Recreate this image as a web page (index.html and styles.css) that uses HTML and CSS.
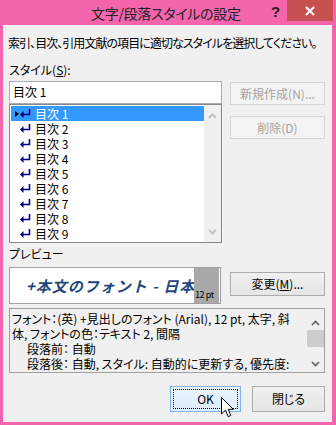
FILE: index.html
```html
<!DOCTYPE html>
<html lang="ja">
<head>
<meta charset="utf-8">
<link rel="stylesheet" href="styles.css">
</head>
<body>
<div class="window">
  <div class="titlebar">
    <div class="title">文字/段落スタイルの設定</div>
    <div class="help">?</div>
    <div class="close">
      <svg width="10" height="10" viewBox="0 0 10 10"><path d="M1 1L9 9M9 1L1 9" stroke="#fff" stroke-width="2" fill="none"/></svg>
    </div>
  </div>
  <div class="client">
    <p class="intro">索引、目次、引用文献の項目に適切なスタイルを選択してください。</p>
    <div class="top">
      <div class="left">
        <div class="label">スタイル(<u>S</u>):</div>
        <div class="input">目次 1</div>
        <div class="list">
          <div class="items">
            <div class="item sel"><span class="tri"></span><svg class="ret" width="11" height="9" viewBox="0 0 11 9"><path d="M9.5 0V5.5H3" stroke="#000080" stroke-width="1.6" fill="none"/><path d="M0 5.5L3.5 2V9Z" fill="#000080"/></svg><span>目次 1</span></div>
            <div class="item"><span class="tri"></span><svg class="ret" width="11" height="9" viewBox="0 0 11 9"><path d="M9.5 0V5.5H3" stroke="#000080" stroke-width="1.6" fill="none"/><path d="M0 5.5L3.5 2V9Z" fill="#000080"/></svg><span>目次 2</span></div>
            <div class="item"><span class="tri"></span><svg class="ret" width="11" height="9" viewBox="0 0 11 9"><path d="M9.5 0V5.5H3" stroke="#000080" stroke-width="1.6" fill="none"/><path d="M0 5.5L3.5 2V9Z" fill="#000080"/></svg><span>目次 3</span></div>
            <div class="item"><span class="tri"></span><svg class="ret" width="11" height="9" viewBox="0 0 11 9"><path d="M9.5 0V5.5H3" stroke="#000080" stroke-width="1.6" fill="none"/><path d="M0 5.5L3.5 2V9Z" fill="#000080"/></svg><span>目次 4</span></div>
            <div class="item"><span class="tri"></span><svg class="ret" width="11" height="9" viewBox="0 0 11 9"><path d="M9.5 0V5.5H3" stroke="#000080" stroke-width="1.6" fill="none"/><path d="M0 5.5L3.5 2V9Z" fill="#000080"/></svg><span>目次 5</span></div>
            <div class="item"><span class="tri"></span><svg class="ret" width="11" height="9" viewBox="0 0 11 9"><path d="M9.5 0V5.5H3" stroke="#000080" stroke-width="1.6" fill="none"/><path d="M0 5.5L3.5 2V9Z" fill="#000080"/></svg><span>目次 6</span></div>
            <div class="item"><span class="tri"></span><svg class="ret" width="11" height="9" viewBox="0 0 11 9"><path d="M9.5 0V5.5H3" stroke="#000080" stroke-width="1.6" fill="none"/><path d="M0 5.5L3.5 2V9Z" fill="#000080"/></svg><span>目次 7</span></div>
            <div class="item"><span class="tri"></span><svg class="ret" width="11" height="9" viewBox="0 0 11 9"><path d="M9.5 0V5.5H3" stroke="#000080" stroke-width="1.6" fill="none"/><path d="M0 5.5L3.5 2V9Z" fill="#000080"/></svg><span>目次 8</span></div>
            <div class="item"><span class="tri"></span><svg class="ret" width="11" height="9" viewBox="0 0 11 9"><path d="M9.5 0V5.5H3" stroke="#000080" stroke-width="1.6" fill="none"/><path d="M0 5.5L3.5 2V9Z" fill="#000080"/></svg><span>目次 9</span></div>
          </div>
          <div class="vscroll">
            <svg width="9" height="6" viewBox="0 0 9 6"><path d="M1 5L4.5 1.5L8 5" stroke="#c2c2c2" stroke-width="2" fill="none"/></svg>
            <svg width="9" height="6" viewBox="0 0 9 6"><path d="M1 1L4.5 4.5L8 1" stroke="#c2c2c2" stroke-width="2" fill="none"/></svg>
          </div>
        </div>
      </div>
      <div class="right">
        <button class="btn" disabled>新規作成(N)...</button>
        <button class="btn" disabled>削除(D)</button>
      </div>
    </div>
    <div class="label plabel">プレビュー</div>
    <div class="prow">
      <div class="preview">
        <div class="ptext">+本文のフォント - 日本語</div>
        <div class="psize">12 pt</div>
      </div>
      <button class="btn change">変更(<u>M</u>)...</button>
    </div>
    <div class="desc">
      <div class="dtext">
        <div class="line">フォント：(英) +見出しのフォント (Arial), 12 pt, 太字, 斜</div>
        <div class="line">体, フォントの色：テキスト 2, 間隔</div>
        <div class="line ind">段落前： 自動</div>
        <div class="line ind">段落後： 自動, スタイル: 自動的に更新する, 優先度:</div>
      </div>
      <div class="dscroll">
        <svg width="9" height="6" viewBox="0 0 9 6"><path d="M1 5L4.5 1.5L8 5" stroke="#606060" stroke-width="1.6" fill="none"/></svg>
        <div class="thumb"></div>
        <svg class="down" width="9" height="6" viewBox="0 0 9 6"><path d="M1 1L4.5 4.5L8 1" stroke="#606060" stroke-width="1.6" fill="none"/></svg>
      </div>
    </div>
    <div class="actions">
      <button class="btn ok"><span class="focus">OK</span></button>
      <button class="btn close-btn">閉じる</button>
      <svg class="cursor" width="13" height="21" viewBox="0 0 13 21"><path d="M0.5 0.5V17L4.5 13.2L7.2 19.6L9.8 18.5L7.2 12.3H12.3Z" fill="#fff" stroke="#000" stroke-width="1"/></svg>
    </div>
  </div>
</div>
</body>
</html>
```

FILE: styles.css
```css
* { box-sizing: border-box; }
html, body { margin: 0; padding: 0; }
body {
  width: 336px;
  height: 425px;
  overflow: hidden;
  font-family: "Noto Sans CJK JP", "Noto Sans", sans-serif;
  font-feature-settings: "palt";
  font-size: 12px;
  color: #000;
}
.window {
  width: 336px;
  height: 425px;
  background: #f465ae;
  display: flex;
  flex-direction: column;
}
.titlebar {
  height: 25px;
  display: flex;
  align-items: flex-start;
  flex: none;
}
.title {
  margin-left: 91px;
  margin-top: 3px;
  font-size: 14px;
  letter-spacing: -0.3px;
  line-height: 20px;
  color: #222;
  flex: 1;
  white-space: nowrap;
}
.help {
  margin-top: 3px;
  width: 8px;
  font-family: "Liberation Sans", sans-serif;
  font-weight: bold;
  font-size: 15px;
  line-height: 18px;
  color: #222;
  margin-right: 8px;
}
.close {
  width: 46px;
  height: 21px;
  background: #c75050;
  margin-right: 3px;
  display: flex;
  align-items: center;
  justify-content: center;
}
.client {
  flex: 1;
  margin: 0 4px 3px 3px;
  background: #f0f0f0;
  padding: 10px 7px 0 6px;
  display: flex;
  flex-direction: column;
}
.intro {
  margin: 0 0 11px -1px;
  line-height: 16px;
  letter-spacing: -0.95px;
  white-space: nowrap;
}
.label {
  line-height: 16px;
  margin-bottom: 3px;
}
.top {
  display: flex;
  gap: 8px;
}
.left {
  width: 213px;
  display: flex;
  flex-direction: column;
}
.input {
  height: 23px;
  background: #fff;
  border: 1px solid #abadb3;
  padding-left: 3px;
  line-height: 20px;
}
.list {
  height: 139px;
  border: 1px solid #828790;
  background: #fff;
  display: flex;
}
.items {
  flex: 1;
  padding: 1px 0 0 1px;
}
.item {
  height: 15px;
  display: flex;
  align-items: center;
  line-height: 15px;
}
.item .tri {
  width: 0;
  height: 0;
  margin-left: 4px;
  border-left: 4px solid transparent;
  border-top: 3.5px solid transparent;
  border-bottom: 3.5px solid transparent;
}
.item.sel {
  background: #3399ff;
  color: #fff;
}
.item.sel .tri { border-left-color: #000; }
.item .ret { margin-left: 1px; margin-right: 4px; }
.vscroll {
  width: 17px;
  background: #f0f0f0;
  display: flex;
  flex-direction: column;
  align-items: center;
  justify-content: space-between;
  padding: 8px 0 7px;
}
.right {
  width: 95px;
  padding-top: 20px;
  display: flex;
  flex-direction: column;
  gap: 11px;
}
.btn {
  font-family: inherit;
  font-feature-settings: "palt";
  font-size: 12px;
  color: #000;
  height: 23px;
  border: 1px solid #acacac;
  background: linear-gradient(#f0f0f0, #e5e5e5);
  padding: 0;
  margin: 0;
  display: flex;
  align-items: center;
  justify-content: center;
  line-height: 16px;
}
.btn:disabled {
  color: #a3a3a3;
  border-color: #d5d5d5;
  background: #f3f3f3;
}
.plabel { margin-top: 3px; margin-bottom: 5px; }
.prow {
  display: flex;
  align-items: flex-start;
  gap: 9px;
}
.preview {
  width: 212px;
  height: 37px;
  border: 1px solid #a0a0a0;
  background: #fff;
  padding-right: 1px;
  display: flex;
  overflow: hidden;
}
.ptext {
  flex: 1;
  overflow: hidden;
  white-space: nowrap;
  padding-left: 16px;
  font-size: 15px;
  font-weight: bold;
  font-style: italic;
  letter-spacing: 1px;
  color: #1f497d;
  line-height: 35px;
  font-feature-settings: normal;
}
.psize {
  width: 25px;
  background: #a9a9a9;
  font-size: 9px;
  line-height: 10px;
  display: flex;
  align-items: flex-end;
  padding: 0 0 3px 1px;
  white-space: nowrap;
  letter-spacing: -0.4px;
}
.change {
  width: 95px;
  height: 24px;
  margin-top: 5px;
}
.desc {
  margin-top: 4px;
  height: 65px;
  border: 1px solid #a0a0a0;
  display: flex;
}
.dtext {
  flex: 1;
  padding: 2px 0 0 2px;
  overflow: hidden;
}
.line {
  line-height: 15px;
  height: 15px;
  white-space: nowrap;
}
.line.ind { padding-left: 15px; }
.dscroll {
  width: 17px;
  display: flex;
  flex-direction: column;
  align-items: center;
  padding-top: 11px;
}
.thumb {
  width: 17px;
  height: 17px;
  background: #cdcdcd;
  margin-top: 4px;
}
.dscroll .down { margin-top: 14px; }
.actions {
  margin-top: 13px;
  display: flex;
  justify-content: flex-end;
  gap: 11px;
  position: relative;
}
.actions .btn { height: 26px; }
.ok {
  width: 71px;
  border-color: #7eb4ea;
  background: linear-gradient(#ecf4fc, #dcecfc);
  padding: 2px;
}
.ok .focus {
  flex: 1;
  align-self: stretch;
  display: flex;
  align-items: center;
  justify-content: center;
  border: 1px dotted #000;
}
.close-btn { width: 73px; }
.cursor {
  position: absolute;
  left: 212px;
  top: 11px;
}
```
